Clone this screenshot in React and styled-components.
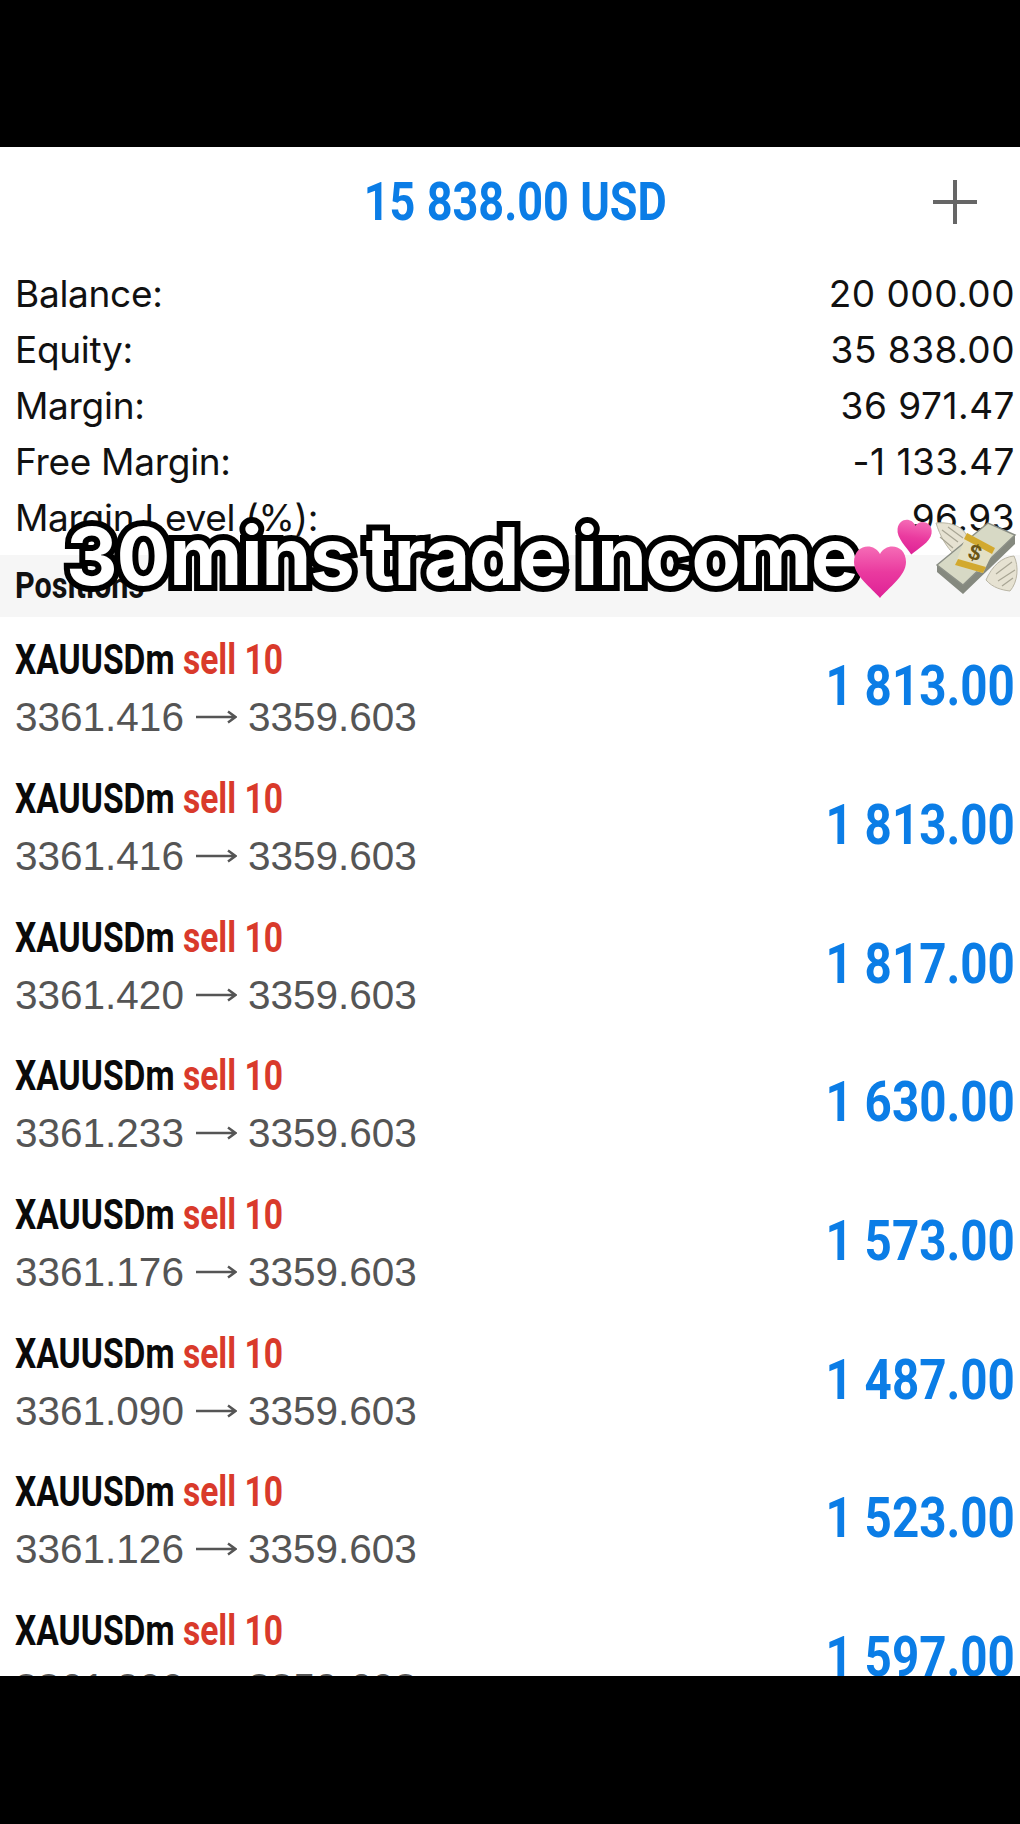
import React from 'react'
import styled, { createGlobalStyle } from 'styled-components'

const Global = createGlobalStyle`
  html, body { margin: 0; padding: 0; background: #000; }
  body { font-family: Inter, "Liberation Sans", Arial, sans-serif; }
`

const Page = styled.div`
  position: relative;
  width: 1020px;
  height: 1824px;
  padding-top: 147px;
  box-sizing: border-box;
  background: #000;
  overflow: hidden;
`

const Screen = styled.div`
  height: 1529px;
  background: #fff;
  overflow: hidden;
`

const Header = styled.div`
  position: relative;
  height: 118px;
  padding: 0 0 8px 10px;
  box-sizing: border-box;
  display: flex;
  align-items: center;
  justify-content: center;
`

const Condensed = styled.div`
  display: inline-block;
  font-family: Roboto, "Liberation Sans", sans-serif;
  font-weight: 700;
  white-space: nowrap;
  transform: scaleX(${(p) => p.$squeeze || 0.85});
  transform-origin: ${(p) => p.$origin || 'left'} center;
`

const Total = styled(Condensed)`
  font-size: 53px;
  color: #0b7de6;
`

const PlusButton = styled.div`
  position: absolute;
  right: 43px;
  top: 33px;
  width: 44px;
  height: 44px;
`

const Summary = styled.div`
  display: flex;
  flex-direction: column;
  padding: 0 5px 0 15px;
`

const SummaryRow = styled.div`
  display: flex;
  justify-content: space-between;
  align-items: center;
  height: 56px;
  font-size: 37px;
  color: #111;
`

const SummaryLabel = styled.span`
  letter-spacing: -0.3px;
`

const SummaryValue = styled.span`
  letter-spacing: 0.5px;
`

const SectionBar = styled.div`
  height: 62px;
  margin-top: 10px;
  padding-left: 15px;
  display: flex;
  align-items: center;
  background: #f6f6f6;
`

const SectionTitle = styled(Condensed)`
  font-size: 36px;
  color: #111;
`

const Position = styled.div`
  display: flex;
  justify-content: space-between;
  align-items: center;
  height: 138.7px;
  padding: 0 5px 0 15px;
  box-sizing: border-box;
`

const PositionInfo = styled.div`
  display: flex;
  flex-direction: column;
  gap: 11px;
  padding-top: 5px;
`

const PositionTitle = styled(Condensed)`
  font-size: 42px;
  line-height: 46px;
  color: #0a0a0a;
`

const Sell = styled.span`
  color: #d93a2b;
`

const Prices = styled.div`
  display: flex;
  align-items: center;
  font-family: "Liberation Sans", sans-serif;
  font-size: 40.5px;
  line-height: 46px;
  color: #555;
`

const Arrow = styled.svg`
  margin: 0 11px 0 12px;
`

const Profit = styled(Condensed)`
  font-size: 56px;
  color: #0b7de6;
`

const Caption = styled.div`
  position: absolute;
  left: 66px;
  top: 510px;
  font-family: Inter, "Liberation Sans", sans-serif;
  font-weight: 700;
  font-size: 80px;
  line-height: 92px;
  letter-spacing: -1.2px;
  word-spacing: -6px;
  white-space: nowrap;
  color: #fff;
  -webkit-text-stroke: 12px #000;
  paint-order: stroke fill;
`

const Stickers = styled.svg`
  position: absolute;
  left: 850px;
  top: 510px;
`

const summary = [
  ['Balance:', '20 000.00'],
  ['Equity:', '35 838.00'],
  ['Margin:', '36 971.47'],
  ['Free Margin:', '-1 133.47'],
  ['Margin Level (%):', '96.93'],
]

const positions = [
  ['3361.416', '1 813.00'],
  ['3361.416', '1 813.00'],
  ['3361.420', '1 817.00'],
  ['3361.233', '1 630.00'],
  ['3361.176', '1 573.00'],
  ['3361.090', '1 487.00'],
  ['3361.126', '1 523.00'],
  ['3361.200', '1 597.00'],
]

const heart = 'M0 -14C-6 -26 -26 -24 -26 -6C-26 8 -8 20 0 30C8 20 26 8 26 -6C26 -24 6 -26 0 -14Z'

function StickerArt() {
  return (
    <Stickers width="170" height="100" viewBox="0 0 170 100">
      <defs>
        <linearGradient id="pink" x1="0" y1="0" x2="0" y2="1">
          <stop offset="0" stopColor="#f56cb6" />
          <stop offset="0.5" stopColor="#ea3a9f" />
          <stop offset="1" stopColor="#de2196" />
        </linearGradient>
      </defs>
      <path d={heart} fill="url(#pink)" transform="translate(30 58)" />
      <path d={heart} fill="url(#pink)" transform="translate(64 25) rotate(8) scale(0.66)" />
      {/* wings */}
      <path d="M86 13C96 12 110 14 116 24C119 31 114 40 104 44C97 38 90 26 86 13Z" fill="#e6e2d2" stroke="#b9b5a4" />
      <path d="M92 20L108 32M98 17L113 28M90 27L103 38" stroke="#a8a594" strokeWidth="1.2" fill="none" />
      <path d="M136 70C142 56 152 47 164 46C169 56 168 72 160 81C152 80 143 78 136 70Z" fill="#e6e2d2" stroke="#b9b5a4" />
      <path d="M146 64L162 52M148 71L165 60M152 76L163 68" stroke="#a8a594" strokeWidth="1.2" fill="none" />
      {/* bills */}
      <path d="M87 55V62L113 84L165 34V25L113 75Z" fill="#85897f" />
      <path d="M87 55L138 13L165 25L113 75Z" fill="#d7d9c5" stroke="#8b8f86" strokeWidth="1.5" />
      <path d="M117 23L145 38L133 63L105 55Z" fill="#e4e0c4" />
      <path d="M117 23L145 38L142 44L114 29Z" fill="#d2a92f" />
      <path d="M108 49L136 57L133 63L105 55Z" fill="#d2a92f" />
      <text x="125" y="50" fontSize="22" fontWeight="700" textAnchor="middle" fill="#6b5514" fontFamily="Liberation Sans, sans-serif" transform="rotate(20 125 43)">$</text>
    </Stickers>
  )
}

export default function App() {
  return (
    <Page>
      <Global />
      <Screen>
        <Header>
          <Total $origin="center">15 838.00 USD</Total>
          <PlusButton>
            <svg width="44" height="44" viewBox="0 0 44 44">
              <path d="M22 0V44M0 22H44" stroke="#666" strokeWidth="4" />
            </svg>
          </PlusButton>
        </Header>
        <Summary>
          {summary.map(([label, value]) => (
            <SummaryRow key={label}>
              <SummaryLabel>{label}</SummaryLabel>
              <SummaryValue>{value}</SummaryValue>
            </SummaryRow>
          ))}
        </Summary>
        <SectionBar>
          <SectionTitle>Positions</SectionTitle>
        </SectionBar>
        {positions.map(([open, profit], i) => (
          <Position key={i}>
            <PositionInfo>
              <div>
                <PositionTitle $squeeze={0.8}>XAUUSDm <Sell>sell 10</Sell></PositionTitle>
              </div>
              <Prices>
                {open}
                <Arrow width="41" height="16" viewBox="0 0 41 16">
                  <path d="M0 8H39M32 2.5L39.5 8L32 13.5" fill="none" stroke="#555" strokeWidth="2.4" />
                </Arrow>
                3359.603
              </Prices>
            </PositionInfo>
            <Profit $origin="right">{profit}</Profit>
          </Position>
        ))}
      </Screen>
      <Caption>30mins trade income</Caption>
      <StickerArt />
    </Page>
  )
}
